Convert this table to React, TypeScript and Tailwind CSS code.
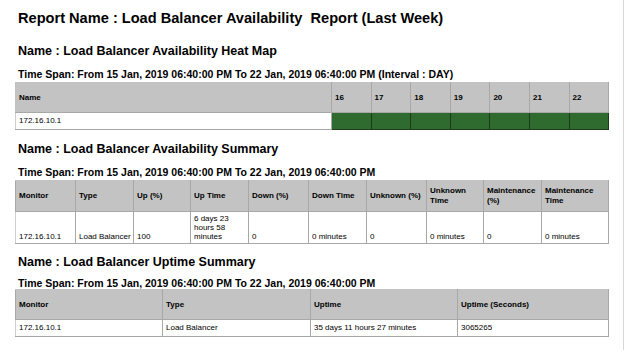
import React from "react";

const cell = "border border-[#a8a8a8] px-[3px] text-left";
const td = `${cell} align-middle`;

export default function App() {
  const days = ["16", "17", "18", "19", "20", "21", "22"];
  const sumCols: [string, number][] = [
    ["Monitor", 60],
    ["Type", 58],
    ["Up (%)", 57],
    ["Up Time", 58],
    ["Down (%)", 60],
    ["Down Time", 58],
    ["Unknown (%)", 60],
    ["Unknown Time", 57],
    ["Maintenance (%)", 58],
    ["Maintenance Time", 67],
  ];
  const sumVals = ["172.16.10.1", "Load Balancer", "100", "6 days 23 hours 58 minutes", "0", "0 minutes", "0", "0 minutes", "0", "0 minutes"];
  return (
    <div
      className="w-[624px] h-[350px] bg-white text-black overflow-hidden border-r border-[#d8d8d8] relative"
      style={{ fontFamily: '"Liberation Sans", Arial, sans-serif' }}
    >
      <div className="pl-[15px] pt-[8px] w-[608px]">
        <div className="pl-[3px] text-[14.6px] font-bold leading-[20px] whitespace-pre">
          Report Name : Load Balancer Availability  Report (Last Week)
        </div>
        <div className="pl-[3px] mt-[15px] text-[12.5px] font-bold leading-[16px]">
          Name : Load Balancer Availability Heat Map
        </div>
        <div className="pl-[3px] mt-[9px] text-[10.5px] font-bold leading-[12px]">
          Time Span: From 15 Jan, 2019 06:40:00 PM To 22 Jan, 2019 06:40:00 PM (Interval : DAY)
        </div>
        <table className="mt-[2px] w-[593px] border-collapse table-fixed text-[8px]">
          <colgroup>
            <col style={{ width: 316 }} />
            {days.map((d) => (
              <col key={d} style={{ width: 39.6 }} />
            ))}
          </colgroup>
          <thead>
            <tr className="h-[30px] bg-[#c3c3c3] font-bold">
              <th className={`${td} border-l-[#c3c3c3] border-t-[#c3c3c3]`}>Name</th>
              {days.map((d) => (
                <th key={d} className={`${td} border-t-[#c3c3c3] border-[#999999]`}>
                  {d}
                </th>
              ))}
            </tr>
          </thead>
          <tbody>
            <tr className="h-[17px]">
              <td className={`${td} border-l-[#d0d0d0]`}>172.16.10.1</td>
              {days.map((d) => (
                <td key={d} className="border border-[#1c3a1c] bg-[#2f6b2f]" />
              ))}
            </tr>
          </tbody>
        </table>

        <div className="pl-[3px] mt-[11px] text-[12.5px] font-bold leading-[16px]">
          Name : Load Balancer Availability Summary
        </div>
        <div className="pl-[3px] mt-[9px] text-[10.5px] font-bold leading-[12px]">
          Time Span: From 15 Jan, 2019 06:40:00 PM To 22 Jan, 2019 06:40:00 PM
        </div>
        <table className="mt-[2px] w-[593px] border-collapse table-fixed text-[8px]">
          <colgroup>
            {sumCols.map(([n, w]) => (
              <col key={n} style={{ width: w }} />
            ))}
          </colgroup>
          <thead>
            <tr className="h-[31px] bg-[#c3c3c3] font-bold leading-[10px]">
              {sumCols.map(([n]) => (
                <th key={n} className={`${td} border-t-[#c3c3c3]`}>
                  {n}
                </th>
              ))}
            </tr>
          </thead>
          <tbody>
            <tr className="h-[32px] leading-[9px]">
              {sumVals.map((v, i) => (
                <td
                  key={i}
                  className={`${cell} px-[2px] align-bottom pb-[2px] ${i === 3 ? "" : "whitespace-nowrap"} ${i === 0 ? "border-l-[#d0d0d0]" : ""}`}
                >
                  {v}
                </td>
              ))}
            </tr>
          </tbody>
        </table>

        <div className="pl-[3px] mt-[10px] text-[12.5px] font-bold leading-[16px]">
          Name : Load Balancer Uptime Summary
        </div>
        <div className="pl-[3px] mt-[7px] text-[10.5px] font-bold leading-[12px]">
          Time Span: From 15 Jan, 2019 06:40:00 PM To 22 Jan, 2019 06:40:00 PM
        </div>
        <table className="mt-[0px] w-[593px] border-collapse table-fixed text-[8px]">
          <colgroup>
            <col style={{ width: 147 }} />
            <col style={{ width: 148 }} />
            <col style={{ width: 147 }} />
            <col style={{ width: 151 }} />
          </colgroup>
          <thead>
            <tr className="h-[30px] bg-[#c3c3c3] font-bold">
              {["Monitor", "Type", "Uptime", "Uptime (Seconds)"].map((n) => (
                <th key={n} className={`${td} border-t-[#c3c3c3]`}>
                  {n}
                </th>
              ))}
            </tr>
          </thead>
          <tbody>
            <tr className="h-[17px]">
              {["172.16.10.1", "Load Balancer", "35 days 11 hours 27 minutes", "3065265"].map((v, i) => (
                <td key={i} className={`${td} ${i === 0 ? "border-l-[#d0d0d0]" : ""}`}>
                  {v}
                </td>
              ))}
            </tr>
          </tbody>
        </table>
      </div>
    </div>
  );
}
